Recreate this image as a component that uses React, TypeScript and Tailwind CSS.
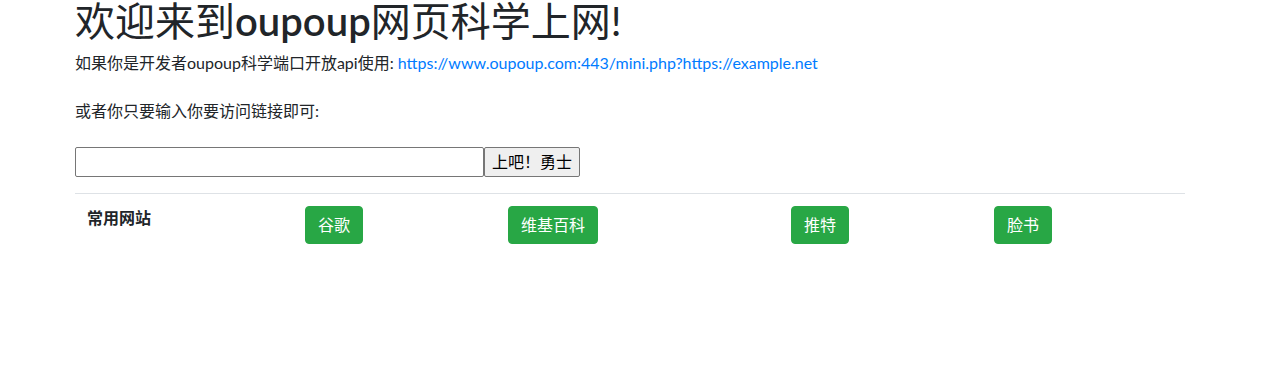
const sites = [
  { label: "谷歌", href: "#" },
  { label: "维基百科", href: "#" },
  { label: "推特", href: "#" },
  { label: "脸书", href: "#" },
];

const font = "font-['Lato','Noto_Sans_CJK_SC',sans-serif]";

export default function App() {
  return (
    <div className={`min-h-[377px] bg-white pt-[1px] text-[16px] leading-6 text-[#212529] ${font}`}>
      <div className="ml-[75px] w-[1110px]">
        <h1 className="mb-[10px] text-[40px] leading-[40px] font-normal">
          欢迎来到<span className="font-semibold">oupoup</span>网页科学上网!
        </h1>
        <p>
          如果你是开发者oupoup科学端口开放api使用:{" "}
          <a href="#" className="text-[#007bff]">
            https://www.oupoup.com:443/mini.php?https://example.net
          </a>
        </p>
        <p className="mt-6">或者你只要输入你要访问链接即可:</p>

        <form className="mt-[24px] flex" onSubmit={(e) => e.preventDefault()}>
          <input
            type="text"
            className="h-[30px] w-[409px] rounded-[2px] border border-[#767676] bg-white px-[2px] outline-none"
          />
          <button
            type="submit"
            className="h-[30px] w-[96px] rounded-[2px] border border-[#767676] bg-[#efefef] px-[6px] text-black"
          >
            上吧！勇士
          </button>
        </form>

        <table className="mt-[16px] w-full border-collapse">
          <tbody>
            <tr className="border-t border-[#dee2e6]">
              <th className="w-[218px] p-3 text-left align-top font-bold">常用网站</th>
              {sites.map((s, i) => (
                <td
                  key={s.label}
                  className={`p-3 align-top ${i === 1 ? "w-[283px]" : "w-[203px]"}`}
                >
                  <a
                    href={s.href}
                    className="inline-block rounded-[4px] border border-[#28a745] bg-[#28a745] px-3 py-[6px] text-white"
                  >
                    {s.label}
                  </a>
                </td>
              ))}
            </tr>
          </tbody>
        </table>
      </div>
    </div>
  );
}
